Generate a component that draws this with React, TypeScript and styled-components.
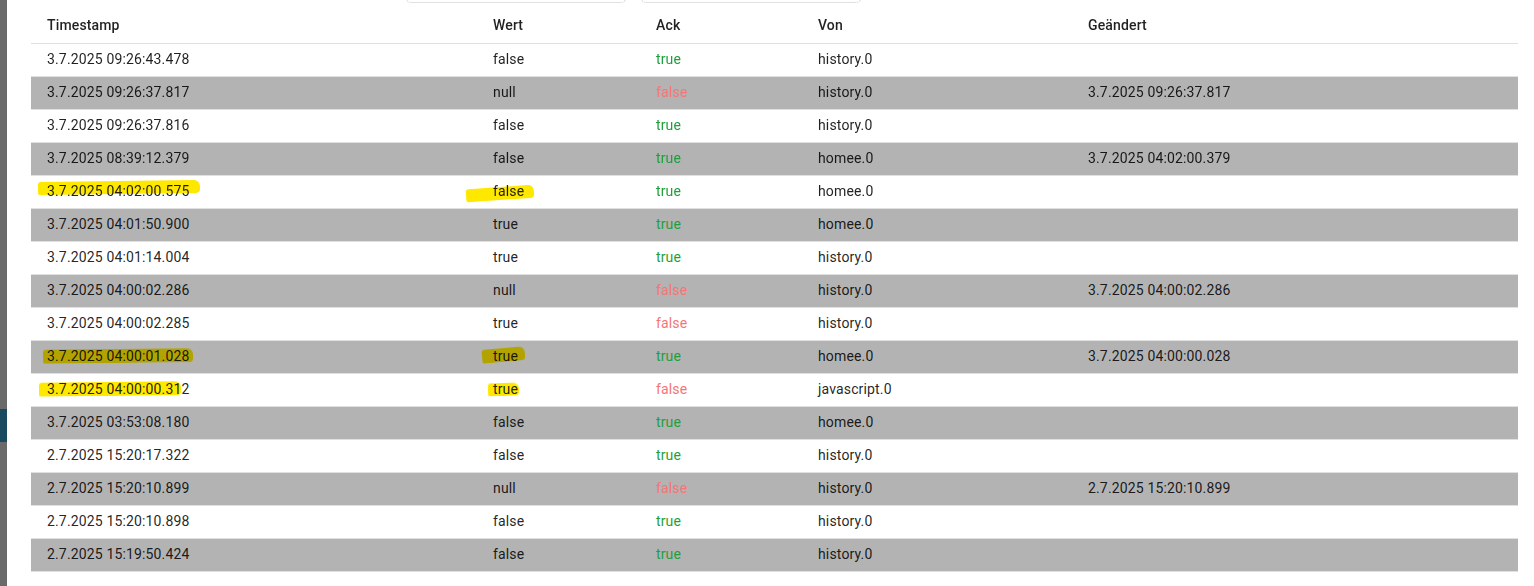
import React from "react";
import styled, { createGlobalStyle } from "styled-components";

const Global = createGlobalStyle`
  html, body { margin: 0; padding: 0; background: #fff; }
  body { font-family: Roboto, "Noto Sans", Arial, sans-serif; overflow: hidden; }
`;

const Page = styled.div`
  display: flex;
  width: 1534px;
  height: 586px;
  overflow: hidden;
`;

const Sidebar = styled.div`
  width: 7px;
  flex: none;
  background: #6a6a6a;
  display: flex;
  flex-direction: column;
`;

const SideSpacer = styled.div`
  height: 409px;
`;

const SideActive = styled.div`
  height: 33px;
  background: #1a4a60;
`;

const Main = styled.div`
  position: relative;
  flex: 1;
  padding: 0 16px 0 24px;
`;

const Toolbar = styled.div`
  position: absolute;
  top: -20px;
  left: 397px;
  display: flex;
  gap: 11px;
`;

const ToolBox = styled.div`
  width: 222px;
  height: 22px;
  border: 1px dotted #c4c4c4;
  border-top: none;
  border-radius: 0 0 8px 8px;
  background: #fff;
`;

const Table = styled.div`
  display: grid;
  grid-template-columns: 446px 163px 162px 270px 1fr;
  font-size: 14px;
  letter-spacing: 0.01071em;
  color: rgba(0, 0, 0, 0.87);
`;

const HeadCell = styled.div`
  padding: 15px 16px 8px;
  line-height: 20px;
  font-weight: 500;
  border-bottom: 1px solid #e0e0e0;
  white-space: nowrap;
`;

const Row = styled.div<{ $grey: boolean }>`
  position: relative;
  grid-column: 1 / -1;
  display: grid;
  grid-template-columns: subgrid;
  height: 32px;
  background: ${(p) => (p.$grey ? "#b3b3b3" : "#fff")};
  border-bottom: 1px solid #e0e0e0;
`;

const Cell = styled.div<{ $tone?: "ok" | "bad" }>`
  padding: 0 16px 2px;
  display: flex;
  align-items: center;
  white-space: nowrap;
  color: ${(p) =>
    p.$tone === "ok" ? "#1f9f3c" : p.$tone === "bad" ? "#f47676" : "inherit"};
`;

const Marker = styled.span`
  position: absolute;
  background: #ffe800;
  mix-blend-mode: multiply;
  border-radius: 3px 6px 4px 2px;
  pointer-events: none;
`;

type Mark = { l: number; t: number; w: number; h: number; r: number };

type Entry = {
  ts: string;
  val: string;
  ack: boolean;
  from: string;
  changed: string;
  marks?: Mark[];
};

const rows: Entry[] = [
  { ts: "3.7.2025 09:26:43.478", val: "false", ack: true, from: "history.0", changed: "" },
  { ts: "3.7.2025 09:26:37.817", val: "null", ack: false, from: "history.0", changed: "3.7.2025 09:26:37.817" },
  { ts: "3.7.2025 09:26:37.816", val: "false", ack: true, from: "history.0", changed: "" },
  { ts: "3.7.2025 08:39:12.379", val: "false", ack: true, from: "homee.0", changed: "3.7.2025 04:02:00.379" },
  {
    ts: "3.7.2025 04:02:00.575", val: "false", ack: true, from: "homee.0", changed: "",
    marks: [
      { l: 7, t: 5, w: 162, h: 13, r: -0.8 },
      { l: 435, t: 11, w: 68, h: 13, r: -4 },
    ],
  },
  { ts: "3.7.2025 04:01:50.900", val: "true", ack: true, from: "homee.0", changed: "" },
  { ts: "3.7.2025 04:01:14.004", val: "true", ack: true, from: "history.0", changed: "" },
  { ts: "3.7.2025 04:00:02.286", val: "null", ack: false, from: "history.0", changed: "3.7.2025 04:00:02.286" },
  { ts: "3.7.2025 04:00:02.285", val: "true", ack: false, from: "history.0", changed: "" },
  {
    ts: "3.7.2025 04:00:01.028", val: "true", ack: true, from: "homee.0", changed: "3.7.2025 04:00:00.028",
    marks: [
      { l: 12, t: 8, w: 150, h: 14, r: -0.6 },
      { l: 451, t: 7, w: 43, h: 14, r: -5 },
    ],
  },
  {
    ts: "3.7.2025 04:00:00.312", val: "true", ack: false, from: "javascript.0", changed: "",
    marks: [
      { l: 8, t: 8, w: 142, h: 14, r: -0.6 },
      { l: 457, t: 9, w: 31, h: 13, r: -2 },
    ],
  },
  { ts: "3.7.2025 03:53:08.180", val: "false", ack: true, from: "homee.0", changed: "" },
  { ts: "2.7.2025 15:20:17.322", val: "false", ack: true, from: "history.0", changed: "" },
  { ts: "2.7.2025 15:20:10.899", val: "null", ack: false, from: "history.0", changed: "2.7.2025 15:20:10.899" },
  { ts: "2.7.2025 15:20:10.898", val: "false", ack: true, from: "history.0", changed: "" },
  { ts: "2.7.2025 15:19:50.424", val: "false", ack: true, from: "history.0", changed: "" },
];

export default function App() {
  return (
    <>
      <Global />
      <Page>
        <Sidebar>
          <SideSpacer />
          <SideActive />
        </Sidebar>
        <Main>
          <Table>
            <HeadCell>Timestamp</HeadCell>
            <HeadCell>Wert</HeadCell>
            <HeadCell>Ack</HeadCell>
            <HeadCell>Von</HeadCell>
            <HeadCell>Geändert</HeadCell>
            {rows.map((r, i) => (
              <Row key={i} $grey={i % 2 === 1}>
                <Cell>{r.ts}</Cell>
                <Cell>{r.val}</Cell>
                <Cell $tone={r.ack ? "ok" : "bad"}>{r.ack ? "true" : "false"}</Cell>
                <Cell>{r.from}</Cell>
                <Cell>{r.changed}</Cell>
                {r.marks?.map((m, j) => (
                  <Marker
                    key={j}
                    style={{
                      left: m.l,
                      top: m.t,
                      width: m.w,
                      height: m.h,
                      transform: `rotate(${m.r}deg)`,
                    }}
                  />
                ))}
              </Row>
            ))}
          </Table>
          <Toolbar>
            <ToolBox />
            <ToolBox />
          </Toolbar>
        </Main>
      </Page>
    </>
  );
}
